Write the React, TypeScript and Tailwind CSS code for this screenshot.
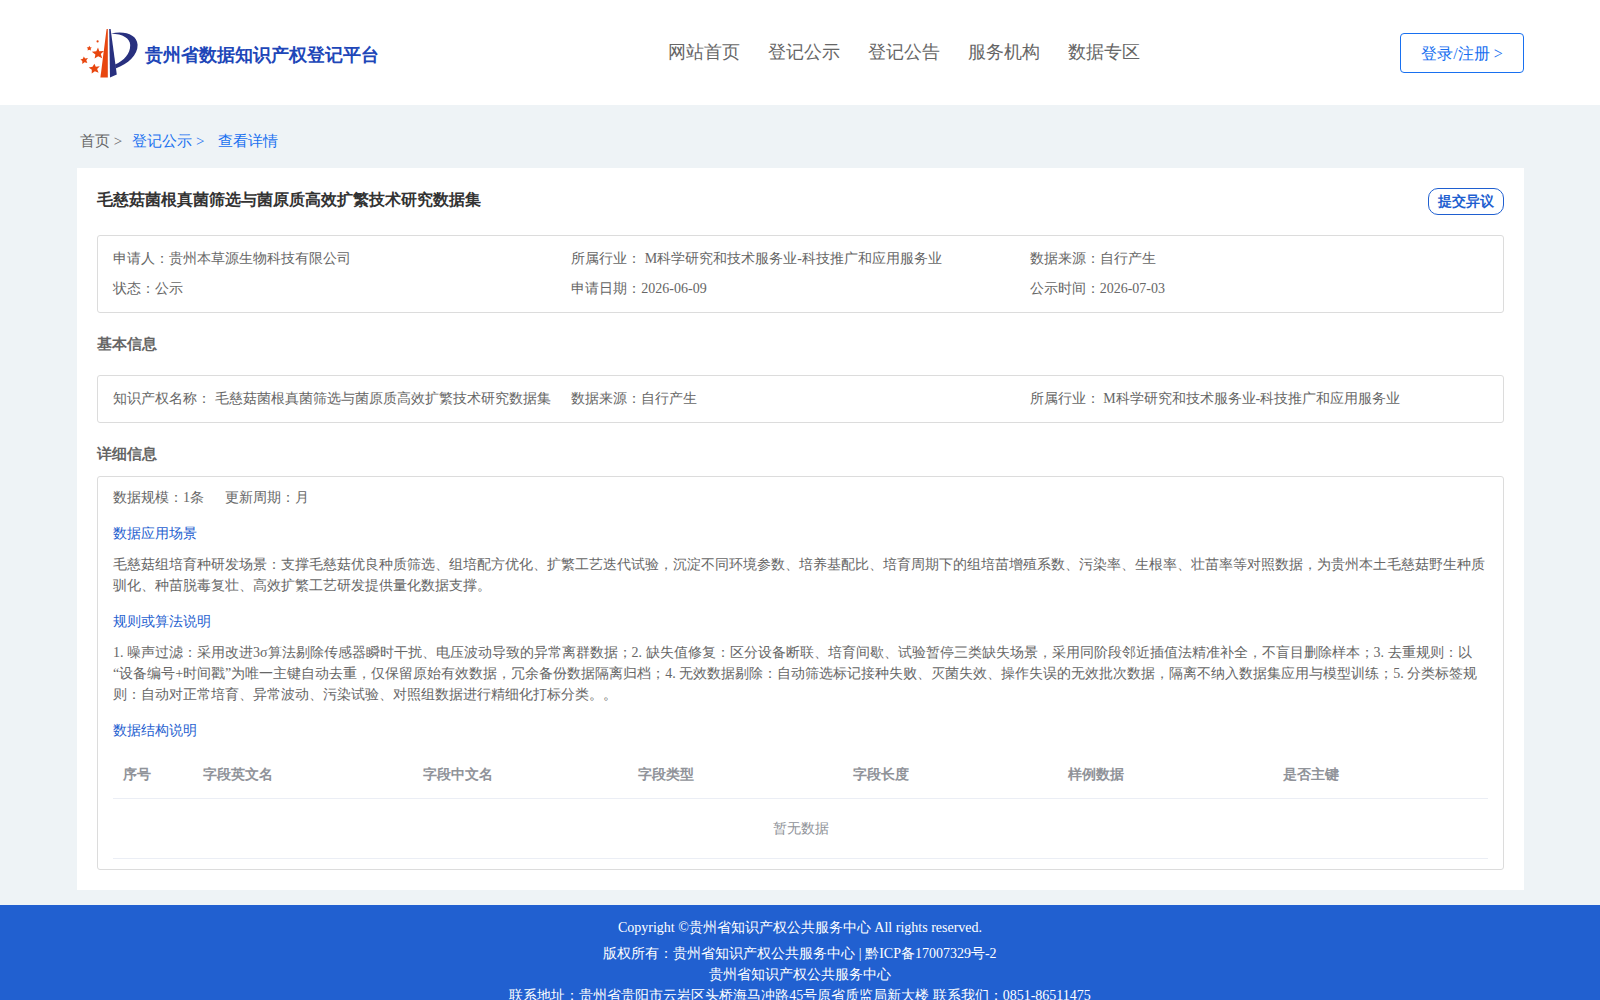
import type { ReactNode } from "react";

const navItems = ["网站首页", "登记公示", "登记公告", "服务机构", "数据专区"];

const summary = [
  ["申请人：", "贵州本草源生物科技有限公司"],
  ["所属行业：", " M科学研究和技术服务业-科技推广和应用服务业"],
  ["数据来源：", "自行产生"],
  ["状态：", "公示"],
  ["申请日期：", "2026-06-09"],
  ["公示时间：", "2026-07-03"],
];

const basicInfo = [
  ["知识产权名称：", " 毛慈菇菌根真菌筛选与菌原质高效扩繁技术研究数据集"],
  ["数据来源：", "自行产生"],
  ["所属行业：", " M科学研究和技术服务业-科技推广和应用服务业"],
];

const columns = ["字段中文名", "字段类型", "字段长度", "样例数据", "是否主键"];

function Logo() {
  return (
    <svg className="h-[50px] w-[58px] shrink-0" viewBox="0 0 58 50" aria-hidden>
      <path d="M26.6 1h1.2L27.8 49.5H20.4z" fill="#e8460f" />
      <path d="M29.2 1h1.4L36.8 46.5 30 49.5z" fill="#28307f" />
      <path
        d="M31 5.4C45 2.4 57 6.4 57.6 16.8C58 27 48 36 35.6 40.4L35 36.6C44 32.6 50.4 25.8 50.2 17C50 10 43 6 31 5.4Z"
        fill="#28307f"
      />
      <g fill="#e8460f">
        <path d="M18 19.4l1.3 3.8 4.7-.2-3.2 3.1 1.4 4.1-4-2-3.6 2.4.8-4.2-3.6-2.7 4.5-.5z" />
        <path d="M14.4 35.8l1.4 2.9 4-.5-2.7 2.9 1.5 3.6-3.7-1.4-3.2 2.3.1-3.9-3.1-2.2 3.8-.8z" />
        <path d="M3.8 28.4l1.3 2 2.9-.3-1.7 2.2 1 2.7-2.7-.8-2.3 1.7v-2.8L.4 31.6l2.5-.9z" />
        <path d="M9.4 17.8l.7 1.4 1.7.2-1.2 1.3.3 1.8-1.7-.8-1.6.9.3-1.8-1.2-1.2 1.8-.3z" />
        <circle cx="17.6" cy="13.4" r="1.1" />
      </g>
    </svg>
  );
}

function InfoBox({ items }: { items: string[][] }) {
  return (
    <dl className="grid grid-cols-3 rounded-[3px] border border-[#dcdcdc] px-[15px] py-2">
      {items.map(([label, value]) => (
        <div key={label} className="flex leading-[30px]">
          <dt className="shrink-0">{label}</dt>
          <dd className="whitespace-pre">{value}</dd>
        </div>
      ))}
    </dl>
  );
}

function Detail({ title, children }: { title: string; children: ReactNode }) {
  return (
    <section>
      <h3 className="mt-[15px] mb-[9px] leading-[22px] text-[#1f5fd0]">{title}</h3>
      {children}
    </section>
  );
}

export default function App() {
  return (
    <div className="min-h-screen bg-[#eef3f6] font-['Liberation_Serif',serif] text-sm leading-[21px] text-[#666]">
      <header className="flex h-[105px] items-center justify-between bg-white pr-[76px] pl-[80px]">
        <a href="#" className="flex w-[328px] items-center gap-[7px]">
          <Logo />
          <span className="pt-1 text-[18px] leading-6 font-bold whitespace-nowrap text-[#2046b8]">
            贵州省数据知识产权登记平台
          </span>
        </a>
        <nav className="flex gap-7 pb-[2px] text-[18px] leading-6">
          {navItems.map((item) => (
            <a key={item} href="#">
              {item}
            </a>
          ))}
        </nav>
        <button type="button" className="h-10 w-[124px] rounded border border-[#1870f0] pt-[2px] text-base text-[#1870f0]">
          登录/注册 &gt;
        </button>
      </header>

      <main className="pr-[76px] pb-[15px] pl-[77px]">
        <div className="flex h-[63px] items-center pt-[10px] pl-[3px] text-[15px]">
          <a href="#">首页 &gt;</a>
          <a href="#" className="ml-[10px] text-[#1870f0]">
            登记公示 &gt;
          </a>
          <span className="ml-[14px] text-[#1870f0]">查看详情</span>
        </div>

        <div className="bg-white p-5">
          <div className="flex h-[47px] items-start justify-between">
            <h1 className="text-base leading-6 font-bold text-[#333]">毛慈菇菌根真菌筛选与菌原质高效扩繁技术研究数据集</h1>
            <button type="button" className="h-[27px] rounded-[10px] border border-[#1f5fd0] px-[9px] font-bold text-[#1f5fd0]">
              提交异议
            </button>
          </div>
          <InfoBox items={summary} />

          <h2 className="mt-5 mb-5 text-[15px] leading-[22px] font-bold">基本信息</h2>
          <InfoBox items={basicInfo} />

          <h2 className="mt-5 mb-[11px] text-[15px] leading-[22px] font-bold">详细信息</h2>
          <div className="rounded-[3px] border border-[#dcdcdc] px-[15px] pt-[10px] pb-[10px]">
            <div className="flex gap-[21px]">
              <span>数据规模：1条</span>
              <span>更新周期：月</span>
            </div>
            <Detail title="数据应用场景">
              <p>
                毛慈菇组培育种研发场景：支撑毛慈菇优良种质筛选、组培配方优化、扩繁工艺迭代试验，沉淀不同环境参数、培养基配比、培育周期下的组培苗增殖系数、污染率、生根率、壮苗率等对照数据，为贵州本土毛慈菇野生种质驯化、种苗脱毒复壮、高效扩繁工艺研发提供量化数据支撑。
              </p>
            </Detail>
            <Detail title="规则或算法说明">
              <p>
                1. 噪声过滤：采用改进3σ算法剔除传感器瞬时干扰、电压波动导致的异常离群数据；2. 缺失值修复：区分设备断联、培育间歇、试验暂停三类缺失场景，采用同阶段邻近插值法精准补全，不盲目删除样本；3. 去重规则：以
                <wbr />
                “设备编号+时间戳”为唯一主键自动去重，仅保留原始有效数据，冗余备份数据隔离归档；4. 无效数据剔除：自动筛选标记接种失败、灭菌失效、操作失误的无效批次数据，隔离不纳入数据集应用与模型训练；5. 分类标签规则：自动对正常培育、异常波动、污染试验、对照组数据进行精细化打标分类。。
              </p>
            </Detail>
            <Detail title="数据结构说明">
              <table className="w-full table-fixed text-left text-[#909399]">
                <thead>
                  <tr className="h-[47px] border-b border-[#ebeef5] align-middle">
                    <th className="w-20 px-[10px]">序号</th>
                    <th className="w-[220px] px-[10px]">字段英文名</th>
                    {columns.map((name) => (
                      <th key={name} className="px-[10px]">
                        {name}
                      </th>
                    ))}
                  </tr>
                </thead>
                <tbody>
                  <tr className="h-[60px] border-b border-[#ebeef5]">
                    <td colSpan={7} className="text-center">
                      暂无数据
                    </td>
                  </tr>
                </tbody>
              </table>
            </Detail>
          </div>
        </div>
      </main>

      <footer className="bg-[#2160d0] pt-[10px] pb-5 text-center text-white">
        <p className="mb-[2px] leading-[26px]">Copyright ©贵州省知识产权公共服务中心 All rights reserved.</p>
        <p>版权所有：贵州省知识产权公共服务中心 | 黔ICP备17007329号-2</p>
        <p>贵州省知识产权公共服务中心</p>
        <p>联系地址：贵州省贵阳市云岩区头桥海马冲路45号原省质监局新大楼 联系我们：0851-86511475</p>
      </footer>
    </div>
  );
}
